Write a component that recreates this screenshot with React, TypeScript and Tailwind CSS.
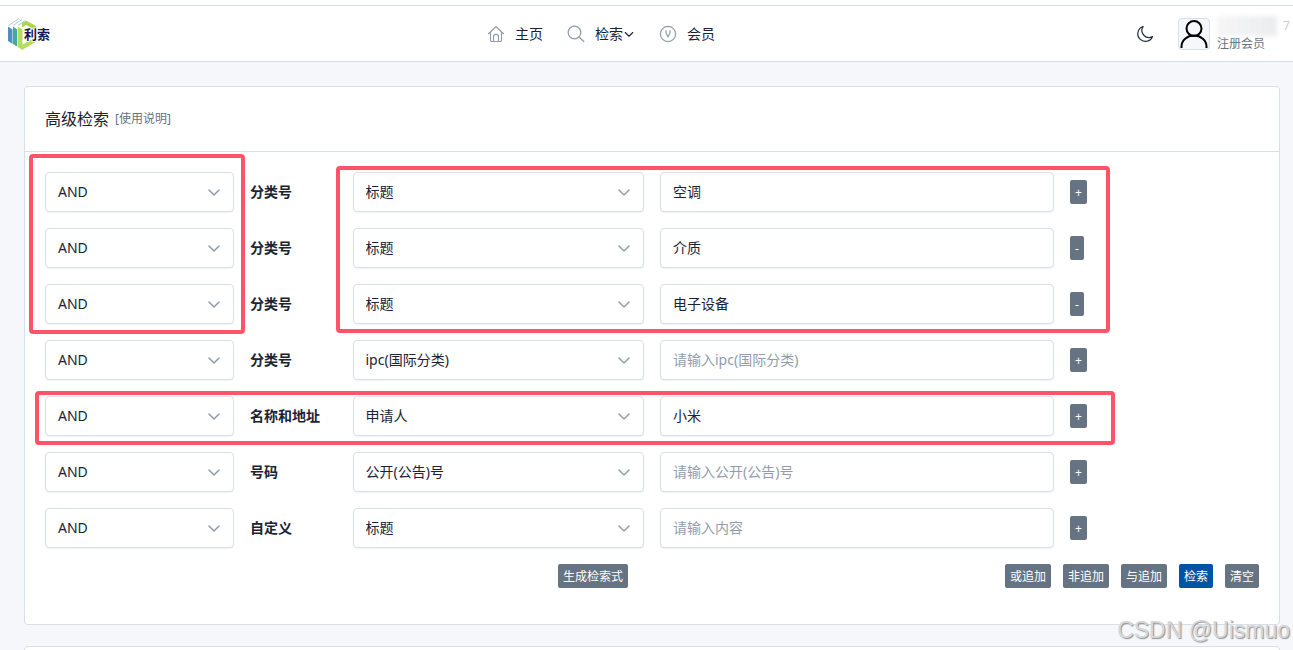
import React from 'react';

interface SearchRow {
  id: string;
  label: string;
  field: string;
  value: string;
  placeholder: string;
  action: '+' | '-';
}

const ROWS: SearchRow[] = [
  { id: 'class-1', label: '分类号', field: '标题', value: '空调', placeholder: '', action: '+' },
  { id: 'class-2', label: '分类号', field: '标题', value: '介质', placeholder: '', action: '-' },
  { id: 'class-3', label: '分类号', field: '标题', value: '电子设备', placeholder: '', action: '-' },
  { id: 'class-4', label: '分类号', field: 'ipc(国际分类)', value: '', placeholder: '请输入ipc(国际分类)', action: '+' },
  { id: 'name', label: '名称和地址', field: '申请人', value: '小米', placeholder: '', action: '+' },
  { id: 'number', label: '号码', field: '公开(公告)号', value: '', placeholder: '请输入公开(公告)号', action: '+' },
  { id: 'custom', label: '自定义', field: '标题', value: '', placeholder: '请输入内容', action: '+' },
];

const Logo: React.FC = () => (
  <svg width="44" height="34" viewBox="0 0 44 34" aria-label="利索">
    <path d="M14 6 18 3.5 28 9V13.500L24.500 11.500 18 8 14 10.500Z" fill="#a9d84e" />
    <path d="M14 28 27 20.500V25.500L14 33Z" fill="#b5dc5c" />
    <path d="M0 9.500 4.500 12.500V27L0 24Z" fill="#4d8fc0" />
    <path d="M5 9.500 9.200 12.500V29.500L5 27Z" fill="#45a89a" />
    <path d="M9.800 9.500 14.500 12.500V33L9.800 30Z" fill="#b5dc5c" />
    <path d="M0.500 8.500 11 1.500M5 8.500 14 2.500M10 8.500 16.500 4" stroke="#a9cdd8" strokeWidth="1" fill="none" />
    <text x="16" y="22" fontSize="13" fontWeight="700" fill="#15174d" stroke="#fff" strokeWidth="1.500" paintOrder="stroke" fontFamily="'Noto Sans CJK SC', sans-serif">利索</text>
  </svg>
);

const HomeIcon: React.FC = () => (
  <svg width="18" height="18" viewBox="0 0 18 18" fill="none" stroke="#929dab" strokeWidth="1.2" strokeLinejoin="round" strokeLinecap="round">
    <path d="M1.5 8.7 9 1.5l7.500 7.200M3.500 7v8.200q0 1.300 1.300 1.300h8.400q1.300 0 1.300-1.300V7" />
    <path d="M6.500 16.500v-4.700a2.500 2.500 0 0 1 5 0v4.700" />
  </svg>
);

const SearchIcon: React.FC = () => (
  <svg width="18" height="18" viewBox="0 0 18 18" fill="none" stroke="#929dab" strokeWidth="1.300" strokeLinecap="round">
    <circle cx="7.500" cy="7.500" r="6.300" />
    <path d="m12 12 4.800 4.500" />
  </svg>
);

const MemberIcon: React.FC = () => (
  <svg width="18" height="18" viewBox="0 0 18 18" fill="none" stroke="#929dab" strokeWidth="1.200" strokeLinecap="round" strokeLinejoin="round">
    <circle cx="9" cy="9" r="7.600" />
    <path d="M7 5.500v2.200L9 12l2-4.300V5.500" />
  </svg>
);

const Chevron: React.FC<{ className: string }> = ({ className }) => (
  <svg className={className} viewBox="0 0 16 16" fill="none" stroke="currentColor" strokeWidth="1.500" strokeLinecap="round" strokeLinejoin="round">
    <path d="m3 6 5 5 5-5" />
  </svg>
);

const MoonIcon: React.FC = () => (
  <svg width="18" height="18" viewBox="0 0 18 18" fill="none" stroke="#232e3c" strokeWidth="1.200" strokeLinejoin="round">
    <path d="M7.200 1.500A7.600 7.600 0 1 0 16.500 11.500 7 7 0 0 1 7.200 1.500Z" />
  </svg>
);

const UserIcon: React.FC = () => (
  <svg width="30" height="30" viewBox="0 0 30 30" fill="none" stroke="#000" strokeWidth="2">
    <circle cx="15" cy="9.500" r="7.500" />
    <path d="M2.500 29v-1.500a12.500 11 0 0 1 25 0V29" />
  </svg>
);

const SelectBox: React.FC<{ label: string; option: string }> = ({ label, option }) => (
  <div className="relative">
    <select
      aria-label={label}
      className="w-full h-10 pl-3 pr-9 appearance-none bg-white border border-[#dadfe5] rounded shadow-[0_1px_1px_rgba(35,46,60,0.06)] text-sm text-[#1a2234]"
    >
      <option>{option}</option>
    </select>
    <Chevron className="absolute right-3 top-3 w-4 h-4 text-[#929dab] pointer-events-none" />
  </div>
);

const SmallButton: React.FC<{ primary?: boolean; children: React.ReactNode }> = ({ primary, children }) => (
  <button
    type="button"
    className={`h-6 px-[5px] pt-px rounded-xs text-xs text-white whitespace-nowrap ${primary ? 'bg-[#0054a6]' : 'bg-[#667382]'}`}
  >
    {children}
  </button>
);

const Header: React.FC = () => (
  <header className="bg-white pt-[5px]">
    <div className="flex items-center justify-between h-[57px] pl-2 border-y border-[#dadfe5] overflow-hidden">
      <a href="#home" className="w-[58px]"><Logo /></a>

      <nav className="flex items-center gap-6 text-sm text-[#1a2234]">
        <a href="#home" className="flex items-center gap-2.5"><HomeIcon />主页</a>
        <a href="#search" className="flex items-center gap-2.5">
          <SearchIcon />
          <span className="flex items-center">检索<Chevron className="w-3 h-3 text-[#1a2234]" /></span>
        </a>
        <a href="#member" className="flex items-center gap-2.5"><MemberIcon />会员</a>
      </nav>

      <div className="flex items-center w-[157px] shrink-0">
        <button type="button" aria-label="切换主题"><MoonIcon /></button>
        <a href="#profile" className="flex items-center ml-6 gap-[7px]">
          <span className="flex items-center justify-center w-8 h-8 bg-[#f5f7fb] border border-[#dadfe5] rounded">
            <UserIcon />
          </span>
          <span className="flex flex-col text-xs text-[#667382]">
            <span className="flex items-center">
              <span className="w-[60px] h-5 bg-linear-to-r from-[#f6f6f7] to-[#ebecee] blur-[2px]" />
              <span className="ml-1.5 text-[#c5cad1]">7</span>
            </span>
            <span>注册会员</span>
          </span>
        </a>
      </div>
    </div>
  </header>
);

const App: React.FC = () => {
  return (
    <div className="relative h-screen overflow-hidden bg-[#f5f7fb] text-[#1a2234] font-['Noto_Sans','Noto_Sans_CJK_SC',sans-serif]">
      <Header />

      <main className="flex flex-col gap-[21px] pt-6 pl-6 pr-[13px]">
        <section className="bg-white border border-[#dadfe5] rounded">
          <div className="flex items-center gap-1.5 h-[65px] px-5 border-b border-[#dadfe5]">
            <h1 className="text-base">高级检索</h1>
            <a href="#help" className="text-xs text-[#667382]">[使用说明]</a>
          </div>

          <form className="px-5 pt-5 pb-9">
            <div className="relative flex flex-col gap-4">
              {ROWS.map((row) => (
                <div key={row.id} className="grid grid-cols-12 gap-4 items-center">
                  <div className="col-span-2">
                    <SelectBox label={`${row.label} 逻辑`} option="AND" />
                  </div>
                  <label htmlFor={row.id} className="text-sm font-bold whitespace-nowrap">{row.label}</label>
                  <div className="col-span-3">
                    <SelectBox label={`${row.label} 字段`} option={row.field} />
                  </div>
                  <input
                    id={row.id}
                    type="text"
                    defaultValue={row.value}
                    placeholder={row.placeholder}
                    className="col-span-4 w-full h-10 px-3 pb-0.5 bg-white border border-[#dadfe5] rounded shadow-[0_1px_1px_rgba(35,46,60,0.06)] text-sm placeholder:text-[#929dab]"
                  />
                  <div className="col-span-2 flex">
                    <SmallButton>{row.action}</SmallButton>
                  </div>
                </div>
              ))}

              {/* Highlight frames */}
              <div className="absolute -left-4 -top-[18px] w-[216px] h-[180px] border-4 border-[#ff5468] rounded-sm pointer-events-none" />
              <div className="absolute left-[291px] -top-1.5 w-[774px] h-[167px] border-4 border-[#ff5468] rounded-sm pointer-events-none" />
              <div className="absolute -left-2.5 top-[219px] w-[1080px] h-[54px] border-4 border-[#ff5468] rounded-sm pointer-events-none" />
            </div>

            <div className="grid grid-cols-2 gap-4 mt-4">
              <div className="flex justify-end pr-4">
                <SmallButton>生成检索式</SmallButton>
              </div>
              <div className="flex justify-end gap-3">
                <SmallButton>或追加</SmallButton>
                <SmallButton>非追加</SmallButton>
                <SmallButton>与追加</SmallButton>
                <SmallButton primary>检索</SmallButton>
                <SmallButton>清空</SmallButton>
              </div>
            </div>
          </form>
        </section>

        <section className="h-16 bg-white border border-[#dadfe5] rounded" />
      </main>

      <div className="absolute right-[3px] bottom-1 font-['Liberation_Sans',sans-serif] text-[23px] leading-8 text-[#d6d7d9] [text-shadow:1px_1px_1px_#909090] pointer-events-none">
        CSDN @Uismuo
      </div>
    </div>
  );
};

export default App;
